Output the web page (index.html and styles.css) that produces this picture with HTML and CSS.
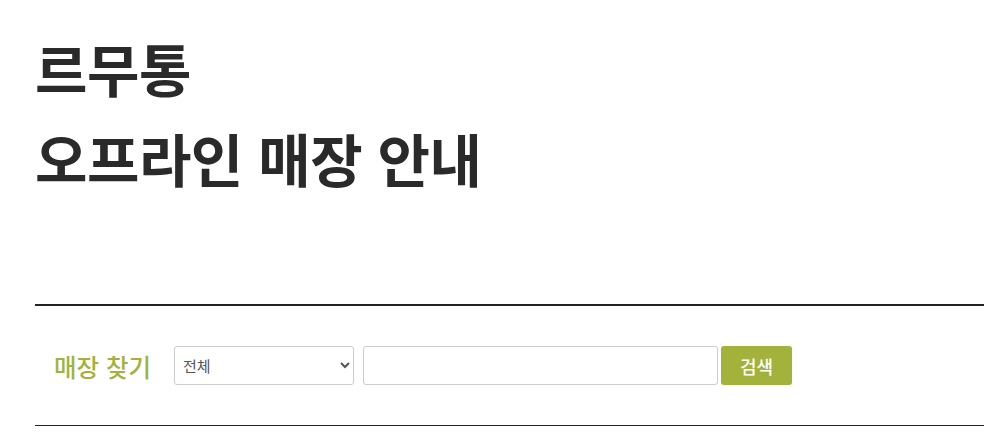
FILE: index.html
```html
<!DOCTYPE html>
<html lang="ko">
<head>
<meta charset="utf-8">
<title>르무통 오프라인 매장 안내</title>
<link rel="stylesheet" href="styles.css">
</head>
<body>
<div class="page">
  <h1 class="title">르무통<br>오프라인 매장 안내</h1>
  <section class="search">
    <h2 class="search-label">매장 찾기</h2>
    <select class="search-select">
      <option>전체</option>
    </select>
    <input class="search-input" type="text">
    <button class="search-btn" type="button">검색</button>
  </section>
</div>
</body>
</html>
```

FILE: styles.css
```css
* { box-sizing: border-box; }
html, body { margin: 0; padding: 0; background: #fff; }
body {
  font-family: "Noto Sans CJK KR", "Noto Sans", sans-serif;
  color: #2a2a2a;
}
.page {
  padding: 22px 0 0 35px;
}
.title {
  margin: 0;
  font-size: 57px;
  font-weight: 700;
  line-height: 90px;
  letter-spacing: -0.5px;
  color: #2a2a2a;
}
.search {
  margin-top: 102px;
  border-top: 2px solid #222;
  border-bottom: 1px solid #222;
  padding: 40px 0 40px 19px;
  display: flex;
  align-items: center;
}
.search-label {
  margin: 1px 23px 0 0;
  font-size: 24.5px;
  font-weight: 500;
  color: #a2b23b;
  letter-spacing: 0;
}
.search-select {
  width: 180px;
  height: 39px;
  border: 1px solid #ccc;
  border-radius: 3px;
  background: #fff;
  font-family: "Noto Sans CJK KR", sans-serif;
  font-size: 15px;
  color: #555;
  padding: 0 4px;
  margin-right: 9px;
}
.search-input {
  width: 355px;
  height: 39px;
  border: 1px solid #ccc;
  border-radius: 3px;
  margin: 0 3px 0 0;
  padding: 0 8px;
}
.search-btn {
  width: 71px;
  height: 39px;
  border: 0;
  border-radius: 3px;
  background: #a2b23b;
  color: #fff;
  font-family: "Noto Sans CJK KR", sans-serif;
  font-size: 18px;
  font-weight: 500;
  padding: 0;
}
```
